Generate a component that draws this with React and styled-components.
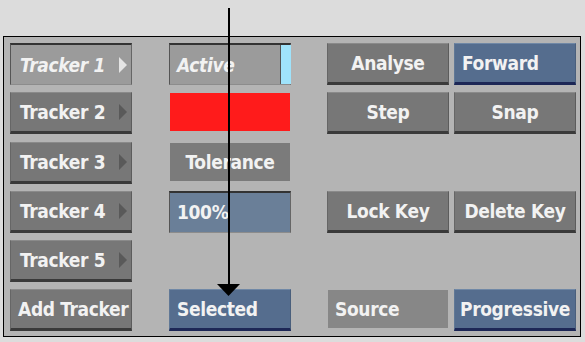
import React from 'react';
import styled, { createGlobalStyle } from 'styled-components';

const GlobalStyle = createGlobalStyle`
  body {
    margin: 0;
    background: #dcdcdc;
    font-family: 'DejaVu Sans Condensed', 'DejaVu Sans', sans-serif;
  }
`;

const Page = styled.div`
  position: relative;
  width: 585px;
  height: 342px;
  padding: 36px 0 0 3px;
  box-sizing: border-box;
`;

const Panel = styled.div`
  width: 578px;
  height: 301px;
  box-sizing: border-box;
  border: 1px solid #000;
  background: #b4b4b4;
  padding: 6px 0 0 6px;
  display: grid;
  grid-template-columns: 159px 158px 127px 122px;
  grid-template-rows: repeat(6, 42px);
  row-gap: 7.25px;
`;

const Cell = styled.div`
  grid-column: ${(p) => p.col};
  grid-row: ${(p) => p.row};
  width: 122px;
  box-sizing: border-box;
  display: flex;
  align-items: center;
  justify-content: ${(p) => (p.left ? 'flex-start' : 'center')};
  padding: ${(p) => (p.left ? '0 7px' : '0')};
  color: #f2f2f2;
  font-size: 19px;
  font-weight: bold;
  letter-spacing: -0.35px;
  white-space: nowrap;
`;

/* raised grey button */
const Button = styled(Cell)`
  background: #777;
  border-top: 1px solid #8a8a8a;
  border-left: 1px solid #666;
  border-right: 1px solid #5c5c5c;
  border-bottom: 3px solid #3a3a3a;
`;

/* raised blue button */
const BlueButton = styled(Cell)`
  background: #556d8e;
  border-top: 1px solid #7088a6;
  border-left: 1px solid #607896;
  border-right: 1px solid #4a5f7c;
  border-bottom: 3px solid #1d2756;
`;

/* sunken field */
const Field = styled(Cell)`
  background: ${(p) => p.bg || '#9b9b9b'};
  border-top: 2px solid #333;
  border-left: 1px solid #555;
  border-right: 1px solid #666;
  border-bottom: 1px solid #8c8c8c;
  font-style: ${(p) => (p.italic ? 'italic' : 'normal')};
`;

/* flat label */
const Label = styled(Cell)`
  background: ${(p) => p.bg || '#7b7b7b'};
  margin: 1px 0 3px 1px;
  width: 120px;
`;

const TrackerButton = styled(Button)`
  justify-content: space-between;
  padding: 0 4px 0 9px;
`;

const TrackerField = styled(Field)`
  justify-content: space-between;
  padding: 0 4px 0 9px;
`;

const Arrowhead = styled.span`
  width: 0;
  height: 0;
  border-top: 8px solid transparent;
  border-bottom: 8px solid transparent;
  border-left: 8px solid ${(p) => (p.light ? '#e4e4e4' : '#595959')};
`;

const ActiveStrip = styled.span`
  align-self: stretch;
  width: 10px;
  background: #9fe3fb;
  border-left: 1px solid #555;
  margin-right: -1px;
`;

const Grow = styled.span`
  flex: 1;
`;

const Pointer = styled.svg`
  position: absolute;
  left: 217px;
  top: 8px;
`;

export default function App() {
  return (
    <Page>
      <GlobalStyle />
      <Panel>
        <TrackerField col={1} row={1} left italic>
          Tracker 1 <Arrowhead light />
        </TrackerField>
        {[2, 3, 4, 5].map((n) => (
          <TrackerButton key={n} col={1} row={n} left>
            Tracker {n} <Arrowhead />
          </TrackerButton>
        ))}
        <Button col={1} row={6} left>Add Tracker</Button>

        <Field col={2} row={1} left italic style={{ paddingRight: 0 }}>
          <Grow>Active</Grow>
          <ActiveStrip />
        </Field>
        <Label col={2} row={2} bg="#ff1b1b" />
        <Label col={2} row={3}>Tolerance</Label>
        <Field col={2} row={4} left bg="#6a7f98">100%</Field>
        <BlueButton col={2} row={6} left>Selected</BlueButton>

        <Button col={3} row={1}>Analyse</Button>
        <Button col={3} row={2}>Step</Button>
        <Button col={3} row={4}>Lock Key</Button>
        <Label col={3} row={6} left bg="#878787">Source</Label>

        <BlueButton col={4} row={1} left>Forward</BlueButton>
        <Button col={4} row={2}>Snap</Button>
        <Button col={4} row={4}>Delete Key</Button>
        <BlueButton col={4} row={6}>Progressive</BlueButton>
      </Panel>
      <Pointer width="24" height="290" viewBox="0 0 24 290">
        <rect x="11" y="0" width="2" height="280" fill="#000" />
        <polygon points="0,276 23,276 11.5,288" fill="#000" />
      </Pointer>
    </Page>
  );
}
